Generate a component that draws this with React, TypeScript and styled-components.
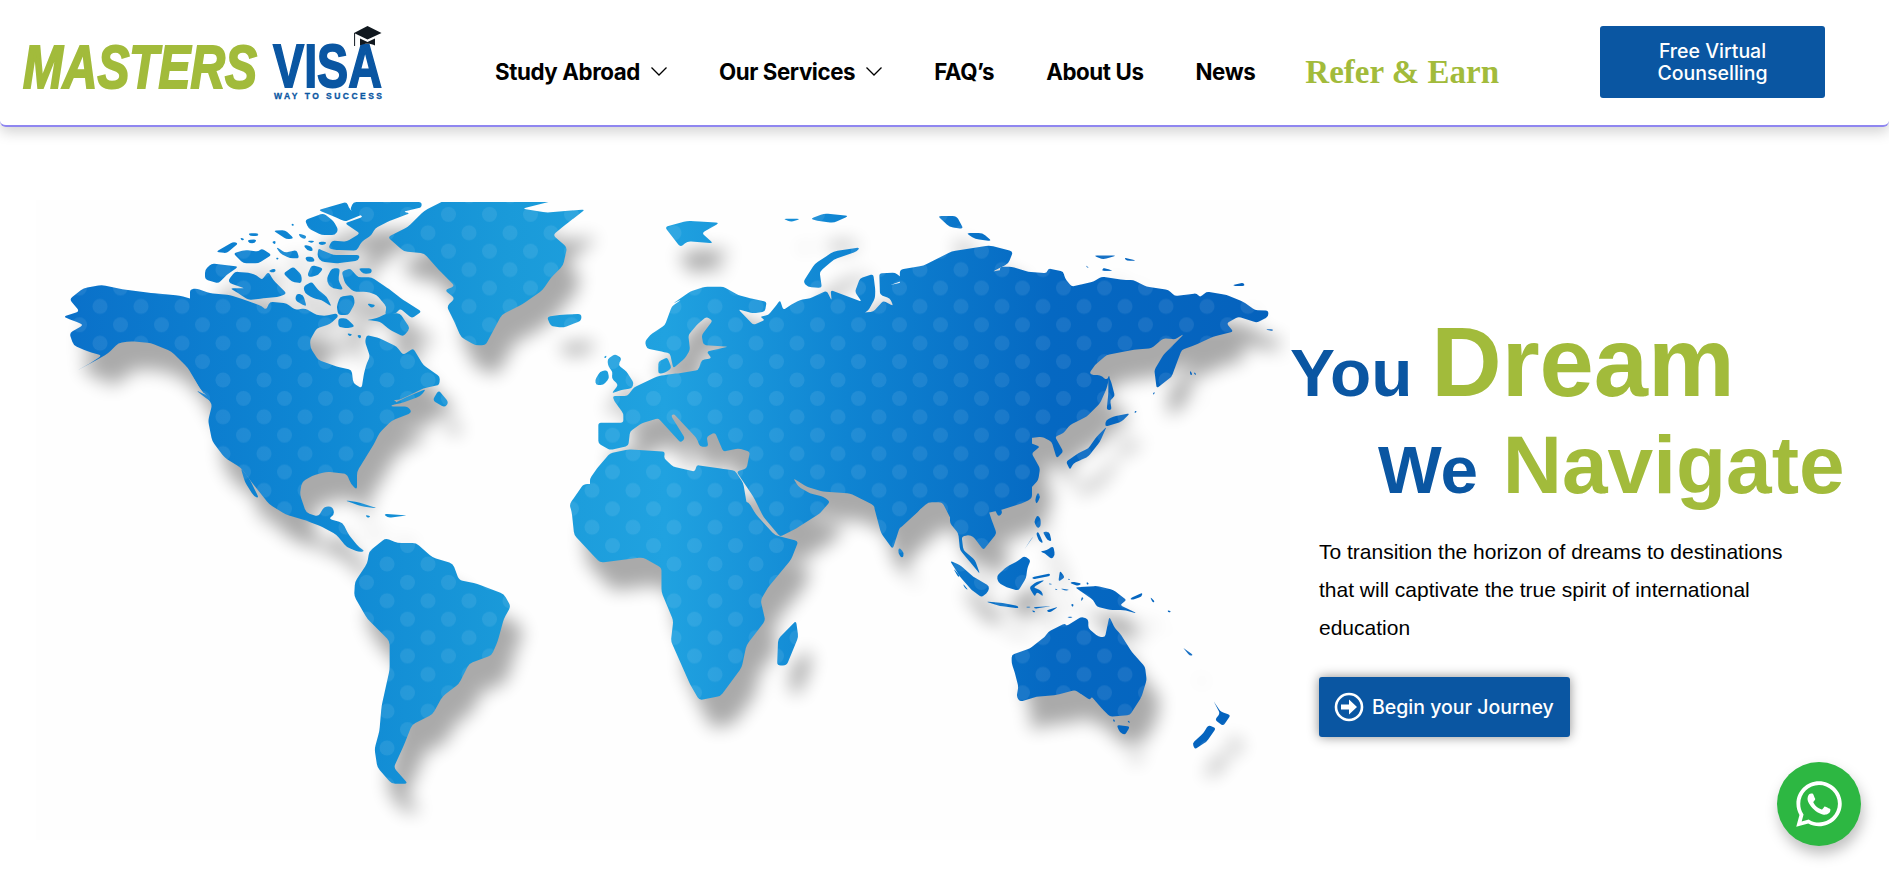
import React from "react";
import styled, { createGlobalStyle } from "styled-components";
import { FaWhatsapp } from "react-icons/fa";

const BLUE = "#0a56a2";
const GREEN = "#a2bb3b";

const Global = createGlobalStyle`
  html, body { margin: 0; padding: 0; background: #fff; overflow: hidden; }
  body { font-family: "Liberation Sans", Arial, sans-serif; }
`;

const Page = styled.div`
  width: 1889px;
  height: 871px;
  overflow: hidden;
  display: flex;
  flex-direction: column;
`;
const Header = styled.header`
  height: 125px;
  flex: none;
  display: flex;
  align-items: center;
  background: #fff;
  border-bottom: 2px solid #8f86f0;
  border-radius: 0 0 6px 6px;
  box-shadow: 0 5px 14px rgba(0, 0, 0, 0.18);
  position: relative;
  z-index: 2;
`;
const LogoMark = styled.svg`
  width: 400px;
  height: 125px;
  flex: none;
`;
const Nav = styled.nav`
  display: flex;
  align-items: center;
  gap: 52px;
  margin-left: 95px;
  padding-top: 17px;
`;
const NavItem = styled.a`
  display: flex;
  align-items: center;
  gap: 11px;
  font-family: Inter, sans-serif;
  font-weight: 700;
  font-size: 22.3px;
  letter-spacing: -0.4px;
  color: #000;
  white-space: nowrap;
`;
const ReferItem = styled.a`
  font-family: "Liberation Serif", serif;
  font-weight: 700;
  font-size: 33px;
  color: ${GREEN};
  white-space: nowrap;
  padding-top: 3px;
  margin-left: -2px;
`;
const Cta = styled.a`
  margin-left: auto;
  margin-right: 64px;
  width: 225px;
  height: 72px;
  margin-top: -2px;
  background: ${BLUE};
  border-radius: 3px;
  color: #fff;
  display: flex;
  align-items: center;
  justify-content: center;
  text-align: center;
  font-family: Inter, sans-serif;
  font-weight: 500;
  font-size: 19.5px;
  line-height: 22px;
`;
const Hero = styled.main`
  flex: 1;
  display: flex;
  align-items: flex-start;
  min-height: 0;
`;
const MapFigure = styled.svg`
  width: 1290px;
  height: 660px;
  flex: none;
  margin-top: 73px;
`;
const Copy = styled.section`
  flex: 1;
  display: flex;
  flex-direction: column;
  padding-top: 187px;
`;
const Heading = styled.h1`
  margin: 0;
  font-weight: 700;
  font-family: "Liberation Sans", Arial, sans-serif;
`;
const HeadingLine = styled.div<{ $indent: number; $after: number }>`
  padding-left: ${(p) => p.$indent}px;
  height: 97px;
  line-height: 97px;
  margin-bottom: ${(p) => p.$after}px;
  white-space: nowrap;
`;
const Small = styled.span`
  color: ${BLUE};
  font-size: 67.5px;
`;
const Big = styled.span<{ $size: number; $shift: number }>`
  color: ${GREEN};
  font-size: ${(p) => p.$size}px;
  margin-left: ${(p) => p.$shift}px;
`;
const Lead = styled.p`
  margin: 20.5px 0 0 29px;
  width: 490px;
  font-size: 21px;
  line-height: 38px;
  color: #000;
`;
const JourneyButton = styled.a`
  margin: 30px 0 0 29px;
  width: 251px;
  height: 60px;
  box-sizing: border-box;
  padding-left: 15px;
  display: flex;
  align-items: center;
  gap: 8px;
  background: ${BLUE};
  border-radius: 3px;
  box-shadow: 0 0 12px rgba(0, 0, 0, 0.45);
  color: #fff;
  font-family: Inter, sans-serif;
  font-weight: 500;
  font-size: 19.5px;
  white-space: nowrap;
`;
const WhatsApp = styled.a`
  position: fixed;
  right: 28px;
  bottom: 25px;
  width: 84px;
  height: 84px;
  border-radius: 50%;
  background: #2db742;
  color: #fff;
  display: flex;
  align-items: center;
  justify-content: center;
  box-shadow: 2px 8px 14px rgba(0, 0, 0, 0.25);
  z-index: 3;
`;

const Chevron = () => (
  <svg width="16" height="9" viewBox="0 0 16 9" fill="none" stroke="#000" strokeWidth="1.3">
    <polyline points="0.5,0.5 8,8 15.5,0.5" />
  </svg>
);

const ArrowCircle = () => (
  <svg width="30" height="30" viewBox="0 0 30 30">
    <circle cx="15" cy="15" r="13" fill="none" stroke="#fff" strokeWidth="2.6" />
    <path d="M7 12.6h8V7.6l8 7.4-8 7.4v-5H7z" fill="#fff" />
  </svg>
);

const LAND: { t: string; r: number; polys: string[] }[] = [
  {
    t: "translate(0 180) scale(.408)",
    r: 9,
    polys: [
      "170,292 205,265 250,257 300,268 370,277 440,283 500,300 500,530 950,530 975,545 955,555 1000,555 1010,570 960,590 930,620 915,650 890,690 875,715 875,760 860,745 850,720 800,715 765,725 740,740 735,770 750,815 780,825 795,800 815,800 820,820 805,830 840,840 855,870 880,900 895,910 880,912 850,900 825,870 790,850 750,835 700,820 660,795 620,745 590,705 550,680 520,640 510,590 520,550 490,510 460,460 420,420 370,400 320,395 290,400 265,425 230,445 180,472 220,450 250,430 215,420 180,405 170,375 205,355 180,345 155,335 195,322",
      "590,705 610,730 635,780 622,775 600,740",
      "480,515 510,530 525,548 505,535",
      "905,910 945,878 975,890 1020,890 1060,925 1110,940 1125,980 1170,990 1235,1015 1252,1045 1235,1075 1220,1130 1205,1165 1150,1185 1125,1235 1085,1265 1060,1310 1010,1335 990,1385 965,1440 1000,1480 960,1480 925,1440 918,1395 930,1350 935,1290 955,1200 955,1130 900,1075 868,1020 870,985 900,940",
      "950,140 1000,115 1040,75 1090,50 1360,50 1280,70 1340,80 1435,72 1385,110 1355,135 1390,165 1380,210 1350,240 1330,270 1280,305 1230,330 1190,405 1165,405 1130,385 1110,340 1095,310 1115,290 1090,270 1115,260 1075,220 1040,180 990,175",
      "1340,335 1380,330 1425,328 1425,345 1380,362 1350,358",
      "845,785 880,790 925,805 885,800",
      "940,818 1000,822 950,828",
      "895,820 910,825 900,828",
      "1060,540 1075,515 1100,545 1090,558",
      "955,553 1000,530 1045,512 1030,530 990,545",
    ],
  },
  {
    t: "translate(190 200) scale(.3333)",
    r: 9,
    polys: [
      "0,268 20,265 60,280 120,285 165,300 215,318 228,330 240,305 290,310 315,330 345,325 380,345 405,348 440,340 445,350 420,372 380,385 360,420 362,445 385,480 440,500 485,510 490,550 515,565 522,520 530,490 540,470 525,425 530,405 570,415 620,440 640,465 670,445 700,495 750,530 748,555 700,565 650,590 625,600 60,600 30,564 0,510",
      "45,210 65,190 145,200 110,225 85,250 45,238",
      "115,240 135,215 175,218 200,225 215,240 235,215 250,240 290,280 270,290 220,295 175,300 145,280 120,265 165,265 120,250",
      "78,155 130,125 145,130 110,160",
      "130,160 165,150 205,155 215,145 245,165 205,190 160,190",
      "150,112 165,118 155,122",
      "175,100 205,100 205,108 180,108",
      "172,120 200,118 195,130 178,130",
      "250,92 285,90 312,115 290,118",
      "245,125 258,122 255,135",
      "258,140 285,158 320,150 328,175 300,175 270,160",
      "325,100 350,108 345,118 330,112",
      "305,70 315,75 305,78",
      "350,122 375,122 365,130",
      "340,135 365,138 370,155 350,150",
      "385,125 410,125 405,135 388,135",
      "345,170 370,170 375,185 350,185",
      "258,172 268,175 260,180",
      "345,60 400,40 430,62 445,90 435,105 395,105 355,85",
      "385,30 470,6 480,30 520,42 465,65 445,55",
      "490,6 695,6 695,22 640,35 660,40 600,62 555,85 545,105 515,125 500,152 440,150 415,145 425,122 470,125 510,100 465,70 520,50 480,30",
      "385,145 395,150 430,165 510,165 505,182 440,190 395,185 382,170",
      "352,225 365,195 400,205 385,225 360,232",
      "280,220 310,200 335,225 335,250 305,245",
      "235,212 255,205 258,215 245,218",
      "410,235 425,205 450,205 445,240 460,270 430,265 415,255",
      "455,215 480,205 505,232 545,232 590,262 640,300 695,335 665,355 630,325 620,340 585,345 590,320 560,285 530,275 490,275 465,250",
      "505,205 545,205 545,220 520,222",
      "450,290 490,285 495,310 475,345 445,345 440,320",
      "340,260 365,245 385,270 410,290 425,320 395,300 370,295 345,280",
      "320,280 340,285 350,320 330,310 315,300",
      "445,355 470,355 495,380 470,385 445,380",
      "530,360 560,355 590,340 630,340 660,385 640,410 600,390 570,365",
      "530,310 558,315 545,325",
      "470,400 488,402 480,410",
      "500,405 515,405 510,418",
    ],
  },
  {
    t: "translate(560 180) scale(.472 .408)",
    r: 8,
    polys: [
      "222,115 270,100 338,105 300,130 325,155 270,150 255,165",
      "472,95 510,95 490,103",
      "530,95 560,82 612,88 580,105 545,100",
      "515,250 540,205 580,175 635,165 630,175 580,195 550,225 555,265 525,262",
      "800,88 840,88 855,120 825,115",
      "860,130 895,130 915,150 880,145",
      "1130,185 1180,185 1150,195",
      "1195,190 1222,198 1200,198",
      "1150,215 1170,222 1150,222",
      "720,220 770,210 830,175 910,160 960,175 950,205 915,225 960,215 1000,240 1000,780 985,790 930,810 830,835 810,790 780,790 720,850 705,905 680,865 665,800 720,700",
      "20,795 50,745 200,745 400,790 415,820 455,870 505,885 490,930 440,1000 425,1030 435,1080 395,1140 385,1195 340,1265 295,1275 275,1235 235,1130 240,1080 215,1010 215,950 175,925 85,938 30,870 25,815",
      "500,1080 505,1120 480,1190 460,1190 462,1125",
      "718,900 730,915 725,928 716,915",
      "1012,765 1018,775 1010,795 1006,785",
    ],
  },
  {
    t: "translate(590 270) scale(.3333)",
    r: 8,
    polys: [
      "25,458 100,458 100,430 72,392 68,378 112,378 132,352 200,320 222,315 265,310 325,300 335,270 365,265 350,245 415,230 340,225 335,195 368,152 350,140 325,160 295,195 300,240 285,265 250,295 240,250 215,245 170,235 165,215 180,195 225,165 245,110 275,88 250,100 300,65 345,50 400,50 445,75 480,85 530,95 525,125 490,130 445,118 490,165 525,150 510,140 535,135 560,105 570,90 580,120 610,100 630,90 660,85 710,62 725,92 722,60 815,95 795,65 810,25 850,12 856,60 855,85 835,122 822,128 850,125 880,92 910,108 900,85 870,75 868,10 915,8 945,30 900,45 990,25 990,720 930,775 885,790 870,740 850,705 780,670 700,665 650,650 610,625 625,650 660,670 700,680 720,695 690,730 620,775 570,800 520,740 490,680 440,605 470,595 480,545 445,535 400,545 375,487 350,500 355,530 330,530 320,505 252,432 243,437 285,505 272,518 205,445 155,460 120,485 115,528 60,540 25,520",
      "205,275 232,262 245,295 225,308 205,312",
      "0,625 25,590 60,550 115,538 225,545 222,565 250,590 315,605 320,585 400,597 435,602 460,640 470,700 510,770 560,810 0,810",
      "52,268 75,252 95,265 85,285 110,305 132,340 125,355 95,360 65,370 85,345 65,325 68,305 55,290",
      "15,330 30,305 52,300 58,325 40,345 18,345",
      "40,262 50,255 48,265",
    ],
  },
  {
    t: "translate(1000 260) scale(.3333)",
    r: 8,
    polys: [
      "0,20 35,20 85,35 140,40 145,25 190,35 195,55 215,80 280,65 305,50 370,60 400,60 440,80 505,90 525,108 590,100 600,112 620,95 680,105 730,125 765,150 805,152 805,170 770,188 715,170 680,190 700,215 640,230 585,255 545,270 530,310 515,350 470,385 463,330 490,285 552,222 525,238 490,235 455,265 410,268 370,275 320,285 285,315 268,340 280,345 300,345 320,360 330,345 320,385 300,430 260,470 210,495 190,520 165,530 190,575 170,595 155,545 125,530 85,535 80,545 120,560 95,580 120,625 115,660 60,720 0,720",
      "325,345 335,370 345,410 330,420 335,450 320,450 325,400",
      "318,480 340,470 390,460 365,485 315,500",
      "320,500 300,545 265,590 220,610 210,630 198,605 235,580 265,565 290,530",
      "405,452 412,455 403,460",
      "570,330 578,345 570,345",
      "583,335 590,345 582,343",
      "458,400 465,395 462,405",
      "698,75 730,68 735,78 705,78",
      "795,208 820,208 818,213",
      "258,15 268,25 260,22",
      "310,25 340,32 305,32",
    ],
  },
  {
    t: "translate(950 500) scale(.3333)",
    r: 8,
    polys: [
      "0,0 205,0 150,20 158,40 145,50 130,20 115,30 125,60 140,100 100,150 70,110 55,105 35,110 40,150 75,180 90,222 55,180 30,150 25,100 0,70",
      "262,45 272,55 272,80 262,85 252,65",
      "265,95 280,130 268,125 258,100",
      "278,95 298,95 305,125 292,120",
      "250,110 222,150 245,115",
      "270,155 290,150 310,138 315,165 305,178 285,160",
      "140,228 170,200 205,182 222,168 242,180 232,205 228,235 205,272 170,262 145,248",
      "0,182 30,195 70,230 118,258 115,275 95,292 65,270 30,230",
      "10,205 30,228 25,232",
      "38,250 55,270 45,265",
      "108,305 150,308 205,318 205,325 150,318",
      "225,320 245,320 235,323",
      "250,322 305,318 255,326",
      "288,332 325,320 300,338",
      "245,330 258,335 250,338",
      "238,262 260,245 285,240 250,262 275,272 280,290 260,275 255,290 248,280",
      "245,232 300,220 300,228 250,238",
      "330,212 345,232 325,245",
      "365,245 395,250 385,258 360,250",
      "355,235 362,240 354,240",
      "410,245 418,252 410,255",
      "295,250 310,252 298,254",
      "315,265 325,270 316,270",
      "330,265 360,270 345,272",
      "395,290 402,295 392,305",
      "362,312 372,312 368,322",
      "350,350 370,350 360,355",
      "375,262 440,258 490,270 530,300 510,315 560,340 520,330 480,330 440,320 430,300",
      "540,295 578,278 575,290 545,300",
      "600,290 615,305 608,308",
      "652,330 665,335 655,338",
      "698,442 730,465 720,468",
      "185,465 240,445 285,410 295,395 345,370 350,378 395,350 415,358 415,385 445,410 465,412 478,350 495,385 510,400 545,455 585,500 590,540 575,590 540,645 480,650 455,625 425,590 420,600 375,570 320,585 260,590 210,605 200,590 205,560 195,520 185,490",
      "500,675 540,680 525,705 510,698",
      "490,655 497,665 489,665",
      "533,660 542,668 534,668",
      "790,602 812,635 842,645 820,678 795,660 810,640",
      "775,675 798,685 770,725 735,748 727,730 760,700",
    ],
  },
];

/* Rounds each coast vertex so the traced outlines read as soft coastlines. */
const toPath = (pts: string, r: number) => {
  const p = pts.split(" ").map((s) => s.split(",").map(Number));
  const toward = (a: number[], b: number[]) => {
    const d = Math.hypot(b[0] - a[0], b[1] - a[1]) || 1;
    const k = Math.min(r / d, 0.5);
    return `${(a[0] + (b[0] - a[0]) * k).toFixed(1)} ${(a[1] + (b[1] - a[1]) * k).toFixed(1)}`;
  };
  return (
    p
      .map((c, i) => {
        const prev = p[(i + p.length - 1) % p.length];
        const next = p[(i + 1) % p.length];
        return `${i ? "L" : "M"}${toward(c, prev)}Q${c[0]} ${c[1]} ${toward(c, next)}`;
      })
      .join("") + "Z"
  );
};
const landPaths = () =>
  LAND.flatMap((g, gi) =>
    g.polys.map((p, i) => <path key={gi + "-" + i} d={toPath(p, g.r)} transform={g.t} />)
  );

const WorldMap = () => (
  <MapFigure viewBox="0 200 1290 660" role="img" aria-label="World map">
    <defs>
      <clipPath id="land">{landPaths()}</clipPath>
      <clipPath id="frame">
        <rect x="0" y="202" width="1290" height="658" />
      </clipPath>
      <filter id="soft" x="-5%" y="-5%" width="110%" height="110%">
        <feGaussianBlur stdDeviation="9" />
      </filter>
      <linearGradient id="sea" gradientUnits="userSpaceOnUse" x1="60" y1="0" x2="1270" y2="0">
        <stop offset="0" stopColor="#0a70c9" />
        <stop offset="0.2" stopColor="#0e86d3" />
        <stop offset="0.37" stopColor="#1a9ad9" />
        <stop offset="0.5" stopColor="#20a2e0" />
        <stop offset="0.65" stopColor="#0f84d2" />
        <stop offset="0.82" stopColor="#0568c2" />
        <stop offset="1" stopColor="#0562bd" />
      </linearGradient>
      <pattern id="dots" patternUnits="userSpaceOnUse" width="41" height="36.8" patternTransform="translate(18 12)">
        <circle cx="0" cy="0" r="7.5" fill="#fff" fillOpacity=".08" />
        <circle cx="41" cy="0" r="7.5" fill="#fff" fillOpacity=".08" />
        <circle cx="0" cy="36.8" r="7.5" fill="#fff" fillOpacity=".08" />
        <circle cx="41" cy="36.8" r="7.5" fill="#fff" fillOpacity=".08" />
        <circle cx="20.5" cy="18.4" r="7.5" fill="#fff" fillOpacity=".08" />
      </pattern>
    </defs>
    <rect x="36" y="200" width="1254" height="640" fill="#fefefe" />
    <g clipPath="url(#frame)">
      <g filter="url(#soft)" transform="translate(13 28)" fill="#000" opacity=".33">
        {landPaths()}
      </g>
    </g>
    <g clipPath="url(#frame)">
      <g clipPath="url(#land)">
        <rect x="0" y="200" width="1290" height="660" fill="url(#sea)" />
        <rect x="0" y="200" width="1290" height="660" fill="url(#dots)" />
      </g>
    </g>
  </MapFigure>
);

const Logo = () => (
  <LogoMark viewBox="0 0 400 125" role="img" aria-label="Masters Visa">
    <text x="23" y="88" fontFamily="Liberation Sans" fontWeight="700" fontStyle="italic" fontSize="62" fill={GREEN} stroke={GREEN} strokeWidth="2.2" textLength="234" lengthAdjust="spacingAndGlyphs">MASTERS</text>
    <text x="273" y="87" fontFamily="Liberation Sans" fontWeight="700" fontSize="62" fill={BLUE} stroke={BLUE} strokeWidth="1.8" textLength="109" lengthAdjust="spacingAndGlyphs">VISA</text>
    <text x="274" y="99" fontFamily="Liberation Sans" fontWeight="700" fontSize="8.5" fill={BLUE} stroke={BLUE} strokeWidth=".3" textLength="108" lengthAdjust="spacing">WAY TO SUCCESS</text>
    <path d="M354 33l13.500-7 14 7-14 6.500z" fill="#10181f" />
    <path d="M360 38.500l7.500 3.500 7.500-3.500v7c-4 -2.500-11-2.500-15 0z" fill="#10181f" />
    <path d="M354.600 33v13" stroke="#10181f" strokeWidth="1" />
  </LogoMark>
);

export default function App() {
  return (
    <Page>
      <Global />
      <Header>
        <Logo />
        <Nav>
          <NavItem>Study Abroad <Chevron /></NavItem>
          <NavItem>Our Services <Chevron /></NavItem>
          <NavItem>FAQ’s</NavItem>
          <NavItem>About Us</NavItem>
          <NavItem>News</NavItem>
          <ReferItem>Refer &amp; Earn</ReferItem>
        </Nav>
        <Cta>Free Virtual<br />Counselling</Cta>
      </Header>
      <Hero>
        <WorldMap />
        <Copy>
          <Heading>
            <HeadingLine $indent={0} $after={4.5}>
              <Small>You </Small><Big $size={97.5} $shift={0}>Dream</Big>
            </HeadingLine>
            <HeadingLine $indent={88} $after={0}>
              <Small>We </Small><Big $size={82} $shift={6}>Navigate</Big>
            </HeadingLine>
          </Heading>
          <Lead>To transition the horizon of dreams to destinations that will captivate the true spirit of international education</Lead>
          <JourneyButton><ArrowCircle />Begin your Journey</JourneyButton>
        </Copy>
      </Hero>
      <WhatsApp aria-label="WhatsApp"><FaWhatsapp size={52} /></WhatsApp>
    </Page>
  );
}
